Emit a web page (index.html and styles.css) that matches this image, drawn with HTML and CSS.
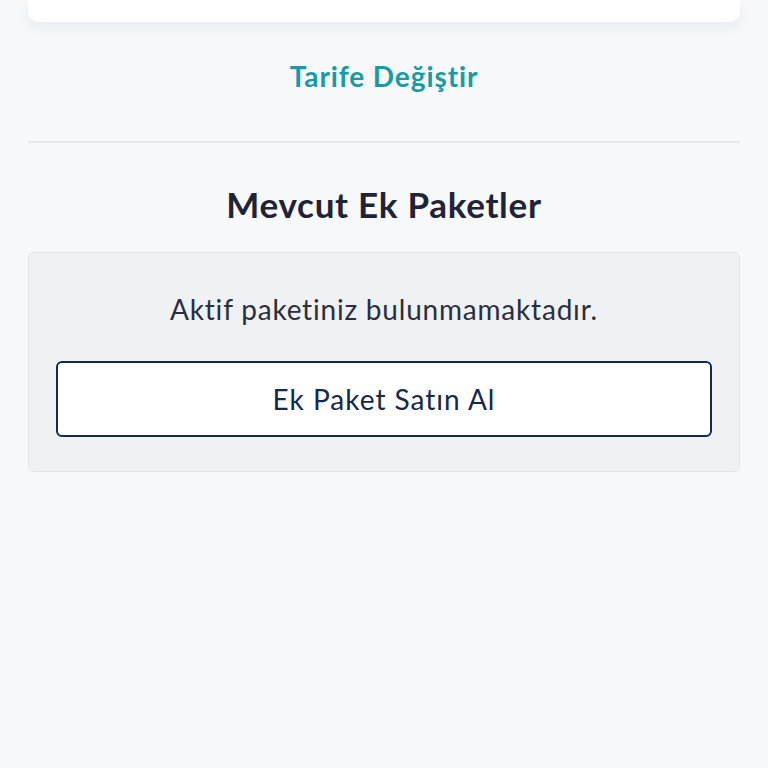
FILE: index.html
```html
<!DOCTYPE html>
<html lang="tr">
<head>
  <meta charset="UTF-8">
  <meta name="viewport" content="width=device-width, initial-scale=1.0">
  <title>Ek Paketler</title>
  <link rel="stylesheet" href="styles.css">
</head>
<body>
  <div class="page">
    <div class="tariff-card"></div>

    <a class="change-link" href="#">Tarife Değiştir</a>

    <hr class="divider">

    <h2 class="section-title">Mevcut Ek Paketler</h2>

    <div class="empty-box">
      <p class="empty-text">Aktif paketiniz bulunmamaktadır.</p>
      <button class="buy-button" type="button">Ek Paket Satın Al</button>
    </div>
  </div>
</body>
</html>
```

FILE: styles.css
```css
body {
  margin: 0;
  background-color: #f7f8fa;
  font-family: Lato, "Noto Sans", sans-serif;
}

.page {
  padding: 0 28px;
  display: flex;
  flex-direction: column;
}

.tariff-card {
  height: 22px;
  background-color: #fff;
  border-radius: 0 0 10px 10px;
  box-shadow: 0 6px 14px rgba(30, 40, 60, 0.06);
}

.change-link {
  align-self: center;
  margin-top: 36px;
  color: #1a9aa6;
  font-size: 28px;
  font-weight: 700;
  letter-spacing: 0.9px;
  text-decoration: none;
  line-height: 36px;
}

.divider {
  width: 100%;
  margin: 47px 0 0;
  border: none;
  border-top: 2px solid #e6e8ec;
}

.section-title {
  margin: 39px 0 0;
  text-align: center;
  color: #1f2336;
  font-size: 35px;
  font-weight: 700;
  letter-spacing: 0.7px;
  line-height: 44px;
}

.empty-box {
  margin-top: 26px;
  padding: 36px 27px 34px;
  background-color: #f0f1f5;
  border: 1px solid #e3e5ea;
  border-radius: 6px;
  display: flex;
  flex-direction: column;
}

.empty-text {
  margin: 0 0 32px;
  text-align: center;
  color: #2b2f3c;
  font-size: 28px;
  letter-spacing: 0.8px;
  line-height: 40px;
}

.buy-button {
  height: 76px;
  background-color: #fff;
  border: 2px solid #14294b;
  border-radius: 6px;
  color: #14294b;
  font-family: inherit;
  font-size: 28px;
  letter-spacing: 1px;
  cursor: pointer;
}
```
